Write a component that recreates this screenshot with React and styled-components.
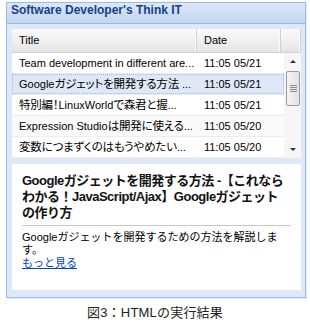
import React from 'react';
import styled, { createGlobalStyle } from 'styled-components';

const GlobalStyle = createGlobalStyle`
  body {
    margin: 0;
    background: #ffffff;
    font-family: "Liberation Sans", "Noto Sans CJK JP", sans-serif;
  }
`;

const Page = styled.div`
  width: 310px;
  padding: 2px 4px 0 6px;
  box-sizing: border-box;
`;

const Panel = styled.div`
  border: 1px solid #99bbe8;
  background: #dfe8f6;
  box-shadow: 1px 1px 0 #e4ecf7;
`;

const PanelHeader = styled.div`
  height: 20px;
  line-height: 20px;
  padding-left: 4px;
  border-bottom: 1px solid #99bbe8;
  background: linear-gradient(#dde8f7, #cbdcf2 60%, #c3d6f0);
  color: #15428b;
  font: bold 12px "Liberation Sans", sans-serif;
`;

const PanelBody = styled.div`
  display: flex;
  flex-direction: column;
  gap: 6px;
  padding: 5px 4px 7px 5px;
`;

const Grid = styled.div`
  background: #ffffff;
`;

const GridHead = styled.div`
  display: grid;
  grid-template-columns: 185px 84px 1fr;
  height: 23px;
  border-bottom: 1px solid #d0d0d0;
  background: linear-gradient(#fafafa, #eeeeee 60%, #e4e4e4);
`;

const HeadCell = styled.div`
  padding-left: 7px;
  line-height: 23px;
  font-size: 11px;
  color: #000;
  border-right: 1px solid #d0d0d0;
  box-shadow: inset -1px 0 0 #fbfbfb;
`;

const GridBody = styled.div`
  display: flex;
  height: 105px;
`;

const Rows = styled.div`
  flex: 1;
`;

const Row = styled.div`
  display: grid;
  grid-template-columns: 185px 1fr;
  height: 20px;
  box-sizing: border-box;
  background: ${p => (p.$selected ? '#dfe8f6' : p.$alt ? '#fafafa' : '#ffffff')};
  outline: ${p => (p.$selected ? '1px dotted #a3bae9' : 'none')};
  outline-offset: -1px;
  margin-bottom: 1px;
  box-shadow: 0 1px 0 #ededed;
`;

const Cell = styled.div`
  padding-left: 7px;
  padding-right: 2px;
  line-height: 20px;
  font-size: 11px;
  white-space: nowrap;
  overflow: hidden;
  color: #000;
`;

const Jp = styled.span`
  font-size: 11.5px;
  font-feature-settings: "palt";
  letter-spacing: -0.2px;
`;

const Scrollbar = styled.div`
  width: 17px;
  display: flex;
  flex-direction: column;
  background: #f6f6f6;
`;

const ScrollButton = styled.div`
  height: 17px;
  display: flex;
  align-items: center;
  justify-content: center;
  &::after {
    content: '';
    border-left: 3px solid transparent;
    border-right: 3px solid transparent;
    ${p => (p.$down ? 'border-top: 3px solid #333;' : 'border-bottom: 3px solid #333;')}
  }
`;

const Thumb = styled.div`
  margin: 1px 1px 0 2px;
  height: 33px;
  border: 1px solid #9a9a9a;
  border-radius: 2px;
  background: linear-gradient(90deg, #f4f4f4, #e2e2e2);
  display: flex;
  flex-direction: column;
  align-items: center;
  justify-content: center;
  gap: 1px;
`;

const Grip = styled.div`
  width: 7px;
  height: 1px;
  background: #8c8c8c;
`;

const Track = styled.div`
  flex: 1;
`;

const Detail = styled.div`
  background: #ffffff;
  height: 126px;
  box-sizing: border-box;
  padding: 9px 10px 0 10px;
`;

const DetailTitle = styled.div`
  font: bold 13px "Liberation Sans", "Noto Sans CJK JP", sans-serif;
  line-height: 16px;
  color: #111;
  letter-spacing: -0.5px;
  white-space: nowrap;
`;

const Rule = styled.hr`
  border: none;
  border-top: 1px solid #c8c8c8;
  margin: 4px 0 5px 0;
`;

const Desc = styled.div`
  font-size: 11px;
  line-height: 13px;
  color: #000;
  white-space: nowrap;
`;

const More = styled.a`
  color: #0044cc;
  text-decoration: underline;
  font-size: 11px;
`;

const Caption = styled.div`
  margin-top: 7px;
  margin-left: -6px;
  margin-right: -4px;
  text-align: center;
  font-size: 13px;
  line-height: 16px;
  letter-spacing: 0.2px;
  color: #222;
`;

const items = [
  { title: 'Team development in different are...', date: '11:05 05/21' },
  { title: <>Google<Jp>ガジェットを開発する方法 ...</Jp></>, date: '11:05 05/21', selected: true },
  { title: <><Jp>特別編！</Jp>LinuxWorld<Jp>で森君と握...</Jp></>, date: '11:05 05/21' },
  { title: <>Expression Studio<Jp>は開発に使える...</Jp></>, date: '11:05 05/20', alt: true },
  { title: <Jp>変数につまずくのはもうやめたい...</Jp>, date: '11:05 05/20' },
];

export default function App() {
  return (
    <Page>
      <GlobalStyle />
      <Panel>
        <PanelHeader>Software Developer's Think IT</PanelHeader>
        <PanelBody>
          <Grid>
            <GridHead>
              <HeadCell>Title</HeadCell>
              <HeadCell>Date</HeadCell>
              <HeadCell />
            </GridHead>
            <GridBody>
              <Rows>
                {items.map((it, i) => (
                  <Row key={i} $selected={it.selected} $alt={it.alt}>
                    <Cell>{it.title}</Cell>
                    <Cell>{it.date}</Cell>
                  </Row>
                ))}
              </Rows>
              <Scrollbar>
                <ScrollButton />
                <Thumb>
                  <Grip />
                  <Grip />
                  <Grip />
                  <Grip />
                </Thumb>
                <Track />
                <ScrollButton $down />
              </Scrollbar>
            </GridBody>
          </Grid>
          <Detail>
            <DetailTitle>
              Googleガジェットを開発する方法 -【これなら<br />
              わかる！JavaScript/Ajax】Googleガジェット<br />
              の作り方
            </DetailTitle>
            <Rule />
            <Desc>
              Googleガジェットを開発するための方法を解説しま<br />
              す。<br />
              <More href="#">もっと見る</More>
            </Desc>
          </Detail>
        </PanelBody>
      </Panel>
      <Caption>図3：HTMLの実行結果</Caption>
    </Page>
  );
}
